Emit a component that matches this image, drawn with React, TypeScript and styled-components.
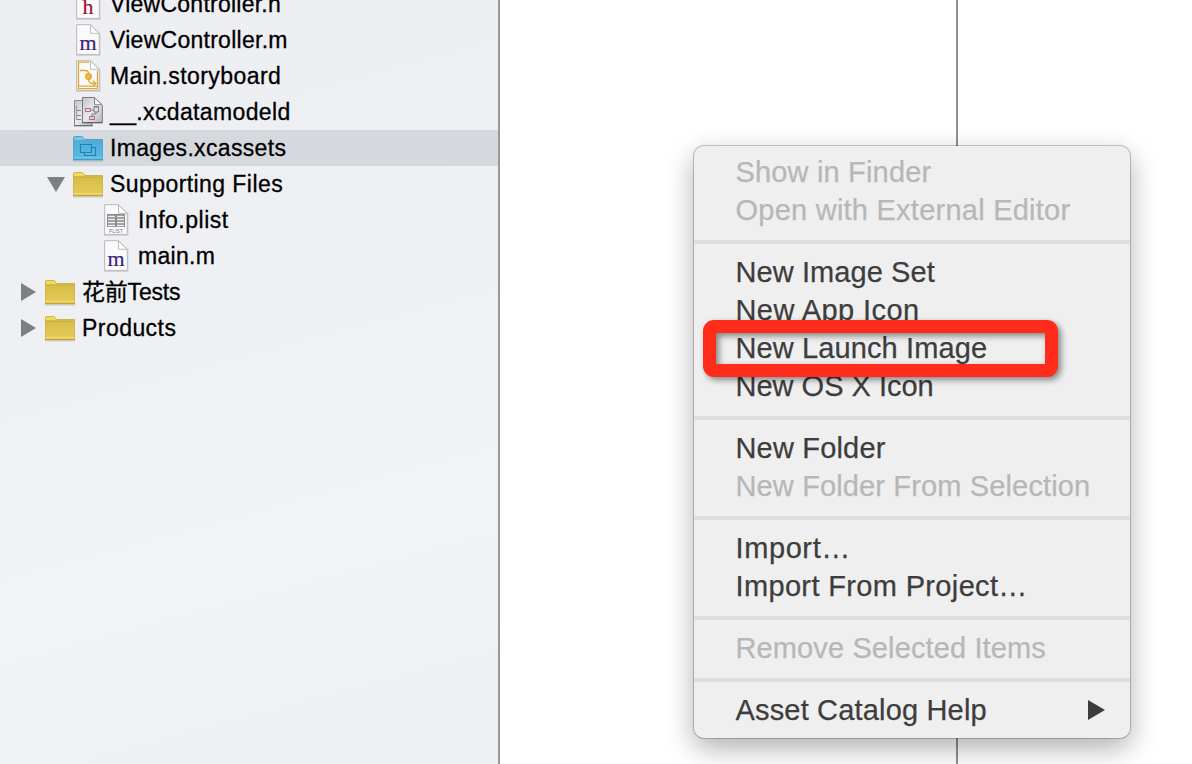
import { ReactNode } from 'react';
import styled, { createGlobalStyle } from 'styled-components';

const GlobalStyle = createGlobalStyle`
  body {
    background: #fff;
    font-family: 'Liberation Sans', 'Noto Sans CJK SC', sans-serif;
    margin: 0;
    overflow: hidden;
  }
`;

const Window = styled.div`
  display: flex;
  height: 764px;
  overflow: hidden;
  position: relative;
  width: 1192px;
`;

const Sidebar = styled.aside`
  background: linear-gradient(165deg, #edeef2 0%, #eff0f4 40%, #f2f3f6 70%, #eeeff3 100%);
  border-right: 2px solid #999;
  box-sizing: border-box;
  flex: none;
  width: 500px;
`;

const Tree = styled.ul`
  list-style: none;
  margin: -14px 0 0;
  padding: 0;
`;

const TreeRow = styled.li<{ $indent: number; $selected?: boolean }>`
  align-items: center;
  background: ${({ $selected }) => ($selected ? '#d5d9de' : 'transparent')};
  box-sizing: border-box;
  display: flex;
  height: 36px;
  padding-left: ${({ $indent }) => 16 + $indent * 28}px;
`;

const Disclosure = styled.span`
  display: flex;
  height: 36px;
  width: 28px;
`;

const IconSlot = styled.span`
  display: flex;
  height: 36px;
  width: 38px;
`;

const FileName = styled.span<{ $tracking: number }>`
  -webkit-text-stroke: 0.3px #000;
  color: #000;
  font-size: 23px;
  letter-spacing: ${({ $tracking }) => $tracking}px;
  line-height: 36px;
  white-space: nowrap;
`;

const EditorList = styled.section`
  border-right: 2px solid #919191;
  flex: none;
  width: 456px;
`;

const EditorCanvas = styled.section`
  flex: 1;
`;

const ContextMenu = styled.div`
  background: #efefef;
  border-radius: 10px;
  box-shadow:
    0 0 0 1px rgba(0, 0, 0, 0.2),
    0 10px 28px rgba(0, 0, 0, 0.32);
  box-sizing: border-box;
  height: 592px;
  left: 694px;
  padding-top: 7px;
  position: absolute;
  top: 146px;
  width: 436px;
`;

const MenuItem = styled.div<{ $disabled?: boolean; $tracking: number }>`
  -webkit-text-stroke: 0.25px currentColor;
  align-items: center;
  color: ${({ $disabled }) => ($disabled ? '#b7b7b7' : '#3d3d3d')};
  display: flex;
  font-size: 29px;
  height: 38px;
  justify-content: space-between;
  letter-spacing: ${({ $tracking }) => $tracking}px;
  line-height: 38px;
  padding: 0 25px 0 41.5px;
  white-space: nowrap;
`;

const Separator = styled.div`
  background: #dedede;
  height: 4px;
  margin: 11px 0 9px;
`;

const Highlight = styled.div`
  border: 13px solid #ff2b1b;
  border-radius: 11px;
  box-sizing: border-box;
  filter: drop-shadow(3px 3px 3px rgba(0, 0, 0, 0.45));
  height: 57px;
  left: 703px;
  position: absolute;
  top: 320px;
  width: 355px;
`;

const Page = ({ children }: { children?: ReactNode }) => (
  <svg width="32" height="36" viewBox="0 0 32 36">
    <path d="M5 3.5H18.5L27.5 12V33H5Z" fill="none" stroke="#000" strokeOpacity=".12" strokeWidth="2" />
    <path d="M4.7 2.7H18.5L27.3 11.5V32.4H4.7Z" fill="#fafafb" stroke="#b9babd" />
    <path d="M18.5 3V11.3H27Z" fill="#fff" stroke="#bcbdc0" />
    {children}
  </svg>
);

const SourceIcon = ({ letter }: { letter: string }) => (
  <Page>
    <text
      x="16"
      y="28"
      textAnchor="middle"
      fontFamily="Liberation Serif, serif"
      fontSize="22"
      fill={letter === 'h' ? '#a1122c' : '#3b1a80'}
      stroke={letter === 'h' ? '#a1122c' : '#3b1a80'}
      strokeWidth=".2"
    >
      {letter}
    </text>
  </Page>
);

const StoryboardIcon = () => (
  <Page>
    <g fill="none" stroke="#e3a72c" strokeWidth="1.3">
      <path d="M17 4.2H6.5V30.7H25.5V12.5M6.5 28.2H25.5" />
      <path d="M8 12.5H13.5Q16.5 12.5 16.5 16M16.5 20Q16.5 25.5 20 25.5H23.5M21 22.8L23.8 25.5L21 28" />
      <circle cx="16.5" cy="18.5" r="2.8" fill="#f3bb35" />
    </g>
  </Page>
);

const DataModelIcon = () => (
  <svg width="32" height="36" viewBox="0 0 32 36">
    <defs>
      <linearGradient id="model" x1="0" y1="0" x2="1" y2="1">
        <stop offset="0" stopColor="#c4c5c7" />
        <stop offset=".5" stopColor="#e9eaeb" />
        <stop offset="1" stopColor="#b4b5b8" />
      </linearGradient>
    </defs>
    <path d="M2.5 6.5H20V31.5H2.5Z" fill="url(#model)" stroke="#8a8b8d" />
    <path d="M2 31.8H21" stroke="#606163" />
    <g fill="none" strokeWidth="1">
      <path d="M5 16.5H9M5 21.5H9M5 25.5H9" stroke="#a67585" />
      <path d="M4.5 12V26" stroke="#9699a8" />
    </g>
    <path d="M10.5 3.5H22.5L30.3 11V28.5H10.5Z" fill="url(#model)" stroke="#77787a" />
    <path d="M10 28.8H30.5" stroke="#58595b" />
    <path d="M22.5 3.8V10.7H30Z" fill="#f8f8f8" stroke="#8a8b8d" />
    <g fill="none">
      <path d="M13.5 14.5H18.5V17.5H13.5ZM17.5 22.5H22.5V25.5H17.5Z" stroke="#b06873" />
      <path d="M22 12.5H26.5V18H22ZM18.5 16H22M24 18V20H20V22" stroke="#747b9b" />
      <path d="M22 13H26.5" stroke="#b06873" />
    </g>
  </svg>
);

const PlistIcon = () => (
  <Page>
    <rect x="7" y="12" width="18" height="13" fill="#8b8b8b" />
    <path d="M8 14.5H15M17 14.5H24M8 17.5H15M17 17.5H24M8 20.5H15M17 20.5H24M8 23.5H15M17 23.5H24" stroke="#eee" strokeWidth="1.4" />
    <text x="16" y="30.8" textAnchor="middle" fontFamily="Liberation Sans, sans-serif" fontSize="5" letterSpacing="0" fill="#777">
      PLIST
    </text>
  </Page>
);

const FolderIcon = ({ blue }: { blue?: boolean }) => {
  const id = blue ? 'folderBlue' : 'folderYellow';
  return (
    <svg width="32" height="36" viewBox="0 0 32 36">
      <defs>
        <linearGradient id={id} x1="0" y1="0" x2="0" y2="1">
          <stop offset="0" stopColor={blue ? '#4eaedb' : '#d7bd48'} />
          <stop offset="1" stopColor={blue ? '#5bbbe4' : '#e5cc58'} />
        </linearGradient>
      </defs>
      <path d="M1 31H31" stroke="#000" strokeOpacity=".16" />
      <path
        d="M1.5 8Q1.5 6.5 3 6.5H9.5Q10.5 6.5 11.2 7.6L12.3 9.5H30.5V29.5H1.5Z"
        fill={blue ? '#75c8e9' : '#efdd57'}
        stroke={blue ? '#529fc2' : '#cbb14b'}
      />
      <path d="M1.5 11.5H30.5V29.5H1.5Z" fill={`url(#${id})`} />
      <path d="M1.5 11H30.5M1 29.8H31" stroke={blue ? '#4296bf' : '#b79934'} />
      <path d="M1.5 27.5H30.5" stroke={blue ? '#70c8e9' : '#eedb73'} />
      {blue && (
        <path
          d="M8.5 14.5H19.5V22.5H8.5ZM20 17.5H23.5V25.5H12.5V23"
          fill="none"
          stroke="#2180b4"
          strokeWidth="1.1"
        />
      )}
    </svg>
  );
};

const Triangle = ({ open }: { open?: boolean }) => (
  <svg width="28" height="36" viewBox="0 0 28 36">
    <path d={open ? 'M3 11H21L12 26Z' : 'M5 9L20 18L5 27Z'} fill="#7e7f81" />
  </svg>
);

type TreeItemType = {
  name: string;
  icon: ReactNode;
  indent: number;
  tracking: number;
  open?: boolean;
  folder?: boolean;
  selected?: boolean;
};

const treeItems: TreeItemType[] = [
  { name: 'ViewController.h', icon: <SourceIcon letter="h" />, indent: 1, tracking: 0.25 },
  { name: 'ViewController.m', icon: <SourceIcon letter="m" />, indent: 1, tracking: 0.27 },
  { name: 'Main.storyboard', icon: <StoryboardIcon />, indent: 1, tracking: 0.42 },
  { name: '__.xcdatamodeld', icon: <DataModelIcon />, indent: 1, tracking: 0.36 },
  { name: 'Images.xcassets', icon: <FolderIcon blue />, indent: 1, tracking: 0.33, selected: true },
  { name: 'Supporting Files', icon: <FolderIcon />, indent: 1, tracking: 0.43, folder: true, open: true },
  { name: 'Info.plist', icon: <PlistIcon />, indent: 2, tracking: 0.5 },
  { name: 'main.m', icon: <SourceIcon letter="m" />, indent: 2, tracking: 0.3 },
  { name: '花前Tests', icon: <FolderIcon />, indent: 0, tracking: -0.2, folder: true },
  { name: 'Products', icon: <FolderIcon />, indent: 0, tracking: 0.45, folder: true }
];

type MenuItemType = {
  label: string;
  tracking: number;
  disabled?: boolean;
  submenu?: boolean;
};

const menuGroups: MenuItemType[][] = [
  [
    { label: 'Show in Finder', tracking: 0.17, disabled: true },
    { label: 'Open with External Editor', tracking: 0.24, disabled: true }
  ],
  [
    { label: 'New Image Set', tracking: 0.08 },
    { label: 'New App Icon', tracking: 0.42 },
    { label: 'New Launch Image', tracking: 0.11 },
    { label: 'New OS X Icon', tracking: 0 }
  ],
  [
    { label: 'New Folder', tracking: 0.18 },
    { label: 'New Folder From Selection', tracking: 0.14, disabled: true }
  ],
  [
    { label: 'Import…', tracking: 0.6 },
    { label: 'Import From Project…', tracking: 0.35 }
  ],
  [{ label: 'Remove Selected Items', tracking: 0.12, disabled: true }],
  [{ label: 'Asset Catalog Help', tracking: 0.17, submenu: true }]
];

const MenuGroup = ({ items, first }: { items: MenuItemType[]; first: boolean }) => (
  <>
    {!first && <Separator />}
    {items.map(({ label, tracking, disabled, submenu }) => (
      <MenuItem key={label} $disabled={disabled} $tracking={tracking}>
        {label}
        {submenu && (
          <svg width="17" height="20" viewBox="0 0 17 20">
            <path d="M0 0L17 10L0 20Z" fill="#3d3d3d" />
          </svg>
        )}
      </MenuItem>
    ))}
  </>
);

const App = () => {
  return (
    <Window>
      <GlobalStyle />
      <Sidebar>
        <Tree>
          {treeItems.map(({ name, icon, indent, tracking, folder, open, selected }) => (
            <TreeRow key={name} $indent={indent} $selected={selected}>
              <Disclosure>{folder && <Triangle open={open} />}</Disclosure>
              <IconSlot>{icon}</IconSlot>
              <FileName $tracking={tracking}>{name}</FileName>
            </TreeRow>
          ))}
        </Tree>
      </Sidebar>
      <EditorList />
      <EditorCanvas />
      <ContextMenu>
        {menuGroups.map((items, index) => (
          <MenuGroup key={items[0].label} items={items} first={index === 0} />
        ))}
      </ContextMenu>
      <Highlight />
    </Window>
  );
};

export default App;
